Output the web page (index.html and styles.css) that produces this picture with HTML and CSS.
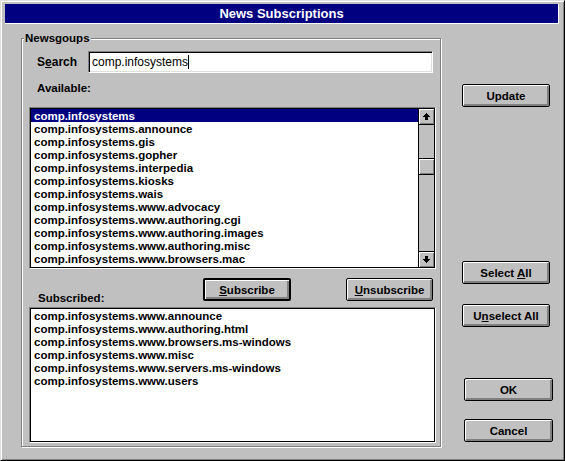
FILE: index.html
```html
<!DOCTYPE html>
<html lang="en">
<head>
    <meta charset="UTF-8">
    <title>News Subscriptions</title>
    <link rel="stylesheet" href="styles.css">
</head>
<body>
    <div class="window">
        <div class="titlebar">News Subscriptions</div>
        <div class="dialog">
            <fieldset class="group">
                <legend>Newsgoups</legend>
                <div class="search-row">
                    <label class="search-label">S<u>e</u>arch</label>
                    <div class="field">comp.infosystems<span class="caret"></span></div>
                </div>
                <div class="avail-label">Available:</div>
                <div class="listbox available">
                    <ul class="items">
                        <li class="selected">comp.infosystems</li>
                        <li>comp.infosystems.announce</li>
                        <li>comp.infosystems.gis</li>
                        <li>comp.infosystems.gopher</li>
                        <li>comp.infosystems.interpedia</li>
                        <li>comp.infosystems.kiosks</li>
                        <li>comp.infosystems.wais</li>
                        <li>comp.infosystems.www.advocacy</li>
                        <li>comp.infosystems.www.authoring.cgi</li>
                        <li>comp.infosystems.www.authoring.images</li>
                        <li>comp.infosystems.www.authoring.misc</li>
                        <li>comp.infosystems.www.browsers.mac</li>
                    </ul>
                    <div class="scrollbar">
                        <div class="arrow arrow-up">
                            <svg width="7" height="7" viewBox="0 0 7 7"><path d="M3.5 0 L7 4 H5 V7 H2 V4 H0 Z" fill="#000" shape-rendering="crispEdges"/></svg>
                        </div>
                        <div class="track">
                            <div class="thumb"></div>
                        </div>
                        <div class="arrow arrow-down">
                            <svg width="7" height="7" viewBox="0 0 7 7"><path d="M3.5 7 L7 3 H5 V0 H2 V3 H0 Z" fill="#000" shape-rendering="crispEdges"/></svg>
                        </div>
                    </div>
                </div>
                <div class="action-row">
                    <div class="sub-label">Subscribed:</div>
                    <button class="btn btn-default subscribe"><u>S</u>ubscribe</button>
                    <button class="btn unsubscribe"><u>U</u>nsubscribe</button>
                </div>
                <div class="listbox subscribed">
                    <ul class="items">
                        <li>comp.infosystems.www.announce</li>
                        <li>comp.infosystems.www.authoring.html</li>
                        <li>comp.infosystems.www.browsers.ms-windows</li>
                        <li>comp.infosystems.www.misc</li>
                        <li>comp.infosystems.www.servers.ms-windows</li>
                        <li>comp.infosystems.www.users</li>
                    </ul>
                </div>
            </fieldset>
            <div class="side">
                <button class="btn update">Update</button>
                <button class="btn select-all">Select <u>A</u>ll</button>
                <button class="btn unselect-all">U<u>n</u>select All</button>
                <button class="btn ok">OK</button>
                <button class="btn cancel">Cancel</button>
            </div>
        </div>
    </div>
</body>
</html>
```

FILE: styles.css
```css
body {
    margin: 0;
    font-family: "Liberation Sans", Arial, sans-serif;
    font-size: 11.5px;
    font-weight: bold;
    color: #000;
    background: #c0c0c0;
}

u {
    text-decoration: underline;
    text-decoration-thickness: 1px;
    text-underline-offset: 1px;
}

.window {
    width: 565px;
    height: 461px;
    box-sizing: border-box;
    border: 1px solid;
    border-color: #dfdfdf #000 #000 #dfdfdf;
    box-shadow: inset 1px 1px #fff, inset -1px -1px #808080;
    background: #c0c0c0;
}

.titlebar {
    width: 553px;
    height: 19px;
    margin: 3px 0 0 4px;
    background: #000080;
    border-right: 1px solid #fff;
    border-bottom: 1px solid #fff;
    color: #fff;
    font-size: 13px;
    line-height: 19px;
    text-align: center;
}

.dialog {
    display: flex;
    align-items: flex-start;
    padding-left: 20px;
}

/* group box */
.group {
    width: 407px;
    min-width: 0;
    margin: 8px 0 0;
    padding: 6px 4px 3px 7px;
    border: 1px solid #808080;
    box-shadow: 1px 1px 0 #fff, inset 1px 1px 0 #fff;
}

.group legend {
    margin-left: -5px;
    padding: 0 1px;
    line-height: 13px;
    background: #c0c0c0;
}

.search-row {
    display: flex;
    align-items: center;
}

.search-label {
    width: 51px;
    padding-left: 8px;
    font-size: 12px;
}

.field {
    width: 340px;
    height: 20px;
    padding-left: 3px;
    border: 1px solid;
    border-color: #808080 #fff #fff #808080;
    box-shadow: inset 1px 1px #000, inset -1px -1px #dfdfdf;
    background: #fff;
    font-size: 12px;
    font-weight: normal;
    line-height: 20px;
}

.caret {
    display: inline-block;
    width: 1px;
    height: 14px;
    background: #000;
    vertical-align: -3px;
}

.avail-label {
    margin-top: 9px;
    padding-left: 8px;
    line-height: 13px;
}

/* list boxes */
.listbox {
    display: flex;
    box-sizing: border-box;
    padding: 1px;
    border: 1px solid;
    border-color: #808080 #fff #fff #808080;
    box-shadow: inset 1px 1px #000, inset -1px -1px #000;
    background: #fff;
}

.available {
    margin-top: 12px;
    height: 162px;
}

.subscribed {
    margin-top: 6px;
    height: 136px;
}

.items {
    flex: 1;
    margin: 0;
    padding: 0;
    list-style: none;
    overflow: hidden;
}

.items li {
    height: 13px;
    padding-left: 3px;
    line-height: 14px;
    white-space: nowrap;
}

.items li.selected {
    background: #000080;
    color: #fff;
}

.scrollbar {
    display: flex;
    flex-direction: column;
    width: 15px;
    margin: -1px -1px -1px 0;
    border: 1px solid #000;
    background: #c0c0c0;
}

.arrow {
    display: flex;
    align-items: center;
    justify-content: center;
    height: 15px;
    box-shadow: inset 1px 1px #fff, inset -1px -1px #808080;
}

.arrow-up {
    border-bottom: 1px solid #000;
}

.arrow-down {
    border-top: 1px solid #000;
}

.track {
    flex: 1;
}

.thumb {
    height: 15px;
    margin-top: 33px;
    border-top: 1px solid #000;
    border-bottom: 1px solid #000;
    box-shadow: inset 1px 1px #fff, inset -1px -1px #808080;
}

.action-row {
    display: flex;
    align-items: flex-end;
    height: 23px;
    margin-top: 9px;
}

.sub-label {
    width: 165px;
    padding-left: 9px;
    margin-bottom: -4px;
    line-height: 13px;
}

/* buttons */
.btn {
    box-sizing: border-box;
    width: 88px;
    height: 23px;
    padding: 0;
    border: 1px solid #000;
    border-radius: 2px;
    background: #c0c0c0;
    box-shadow: inset 1px 1px #fff, inset -2px -2px #808080;
    font: inherit;
    color: #000;
}

.btn-default {
    border-width: 2px;
}

.unsubscribe {
    width: 87px;
    margin-left: 55px;
}

.side {
    display: flex;
    flex-direction: column;
    align-items: flex-start;
    margin-left: 21px;
}

.update {
    margin-top: 60px;
}

.select-all {
    margin-top: 154px;
}

.unselect-all {
    margin-top: 20px;
}

.ok {
    width: 89px;
    margin: 51px 0 0 2px;
}

.cancel {
    width: 89px;
    margin: 18px 0 0 2px;
}
```
